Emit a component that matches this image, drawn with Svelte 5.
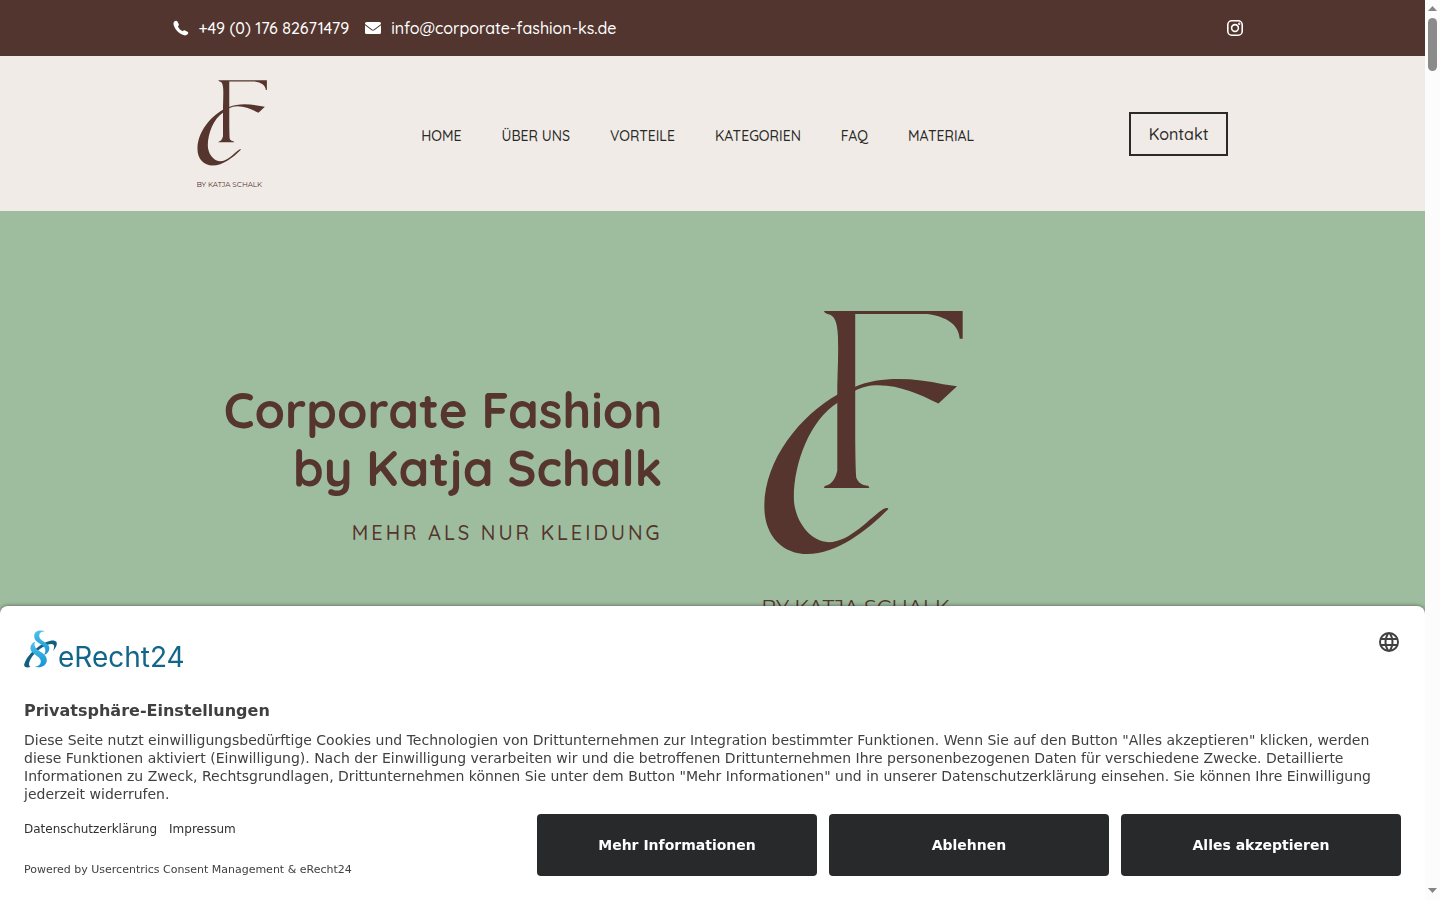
<script lang="ts">
  const phone = '+49 (0) 176 82671479';
  const mail = 'info@corporate-fashion-ks.de';

  const nav = [
    { label: 'Home', href: '#home' },
    { label: 'Über uns', href: '#ueber-uns' },
    { label: 'Vorteile', href: '#vorteile' },
    { label: 'Kategorien', href: '#kategorien' },
    { label: 'FAQ', href: '#faq' },
    { label: 'Material', href: '#material' },
  ];

  const actions = ['Mehr Informationen', 'Ablehnen', 'Alles akzeptieren'];
  let consentOpen = $state(true);

  function choose(action: string) {
    if (action !== 'Mehr Informationen') consentOpen = false;
  }
</script>

{#snippet brand()}
  <svg class="brand" viewBox="67 60 603 924" role="img" aria-label="CF by Katja Schalk">
    <path d="M251 63H669V147H660C658 105 622 80 562 72H345V400C345 470 346 530 348 565C354 580 364 588 384 590L388 597H251L253 591C275 586 284 572 291 545V290C292 240 295 190 293 140C291 95 283 76 262 72C255 71 252 67 251 63Z" />
    <path d="M343 292C420 259 520 264 610 284L652 290L596 342C540 315 480 287 415 287C385 287 365 293 343 304Z" />
    <path d="M293 314C180 378 72 510 71 650C70 745 130 796 200 796C290 796 380 725 445 660C444 656 438 656 430 660C390 685 330 760 265 760C205 757 160 690 160 625C160 520 210 390 293 339Z" />
    <text x="62" y="979">BY KATJA SCHALK</text>
  </svg>
{/snippet}

<div class="page">
  <div class="topbar">
    <div class="inner">
      <a href="tel:+4917682671479">
        <svg width="16" height="16" viewBox="0 0 16 16"><path d="M1.300 1.600C2.300.500 3.700.400 4.400 1.600L5.700 4C6.200 5 5.800 5.500 4.900 6.300C5.700 8.500 7.400 10.200 9.700 11.200C10.500 10.200 11.100 9.900 12 10.400L14.500 11.800C15.600 12.500 15.400 13.700 14.400 14.600C13.100 15.700 11.300 15.700 9 14.600C5.300 12.800 2.400 9.700 1 6C.300 4.200.200 2.700 1.300 1.600Z" /></svg>
        {phone}
      </a>
      <a href="mailto:{mail}">
        <svg width="16" height="16" viewBox="0 0 16 16"><path d="M1.500 2h13A1.500 1.500 0 0 1 16 3.500v.6L8.800 9.600c-.500.350-1.100.350-1.600 0L0 4.100v-.6A1.500 1.500 0 0 1 1.500 2zM0 5.300l6.600 5c.850.600 1.950.600 2.800 0l6.600-5v7.200a1.500 1.500 0 0 1-1.500 1.500h-13A1.500 1.500 0 0 1 0 12.500z" /></svg>
        {mail}
      </a>
      <a class="insta" href="#instagram" aria-label="Instagram">
        <svg width="16" height="16" viewBox="0 0 16 16" class="line"><rect x=".8" y=".8" width="14.4" height="14.4" rx="4" /><circle cx="8" cy="8" r="3.4" /><circle cx="12.2" cy="3.8" r=".4" /></svg>
      </a>
    </div>
  </div>

  <header>
    <div class="inner">
      <a class="logo" href="#home">{@render brand()}</a>
      <nav>
        {#each nav as item}
          <a href={item.href}>{item.label}</a>
        {/each}
      </nav>
      <a class="contact" href="#kontakt">Kontakt</a>
    </div>
  </header>

  <main>
    <div class="inner">
      <div class="intro">
        <h1>Corporate Fashion<br />by Katja Schalk</h1>
        <p>Mehr als nur Kleidung</p>
      </div>
      <div class="emblem">{@render brand()}</div>
    </div>
  </main>
</div>

{#if consentOpen}
  <section class="consent" role="dialog" aria-labelledby="consent-title">
    <div class="consent-head">
      <svg class="vendor" width="164" height="48" viewBox="0 0 164 48" role="img" aria-label="eRecht24">
        <defs>
          <linearGradient id="sky" x1="0" y1="0" x2="0" y2="1">
            <stop offset="0" stop-color="#4fc1ee" />
            <stop offset="1" stop-color="#1593d2" />
          </linearGradient>
        </defs>
        <path class="ring" d="M6.500 37C2 38-.500 37 .300 34C2 28.500 7 22 13.500 17.500C20 12.500 26.500 10 30.500 10.700C34.500 11.500 33 17 29 21C30.800 17 30.500 14 27.500 14C22 14.300 14 19.500 9 25.500C5.500 30 3.500 35 6.500 37Z" />
        <path class="para" d="M21.500 1.700C16.500-1 10.500.700 10.200 5.700C10 11 14.500 12.700 18 15C21.500 17.300 22.500 21 20 25C25.500 23 27.500 17 22.500 13.500C19.500 11.200 15 9.300 15.200 5.500C15.400 2.500 18 1.200 21.500 1.700Z" />
        <path class="para" d="M11 11.500C6 14 5 19 8.500 22.500C12 26 17 27.500 16.800 31.500C16.500 35 14.500 36.500 10.500 36.500C16 38.700 22.500 36 22.800 30.500C23 25.500 18.500 23.300 15 20.800C11.500 18.500 9.500 15.500 11 11.500Z" />
        <text x="34" y="37">eRecht24</text>
      </svg>
      <button class="lang" aria-label="Sprache wählen">
        <svg width="24" height="24" viewBox="0 0 24 24"><path d="M12 2a10 10 0 1 0 0 20 10 10 0 0 0 0-20zm6.900 6h-2.950a15.700 15.700 0 0 0-1.380-3.560A8 8 0 0 1 18.900 8zM12 4.040c.830 1.200 1.480 2.530 1.910 3.960h-3.820c.430-1.430 1.080-2.760 1.910-3.960zM4.260 14a8.200 8.200 0 0 1 0-4h3.380a16.500 16.500 0 0 0 0 4zm.820 2h2.950c.320 1.250.780 2.450 1.380 3.560A8 8 0 0 1 5.080 16zm2.950-8H5.080a8 8 0 0 1 4.330-3.560A15.700 15.700 0 0 0 8.030 8zM12 19.960A14 14 0 0 1 10.090 16h3.820A14 14 0 0 1 12 19.960zM14.340 14H9.660a14.700 14.700 0 0 1 0-4h4.680a14.600 14.600 0 0 1 0 4zm.250 5.560c.600-1.110 1.060-2.310 1.380-3.560h2.950a8 8 0 0 1-4.330 3.560zM16.360 14a16.500 16.500 0 0 0 0-4h3.380a8.200 8.200 0 0 1 0 4z" /></svg>
      </button>
    </div>
    <h2 id="consent-title">Privatsphäre-Einstellungen</h2>
    <p class="copy">
      Diese Seite nutzt einwilligungsbedürftige Cookies und Technologien von Drittunternehmen zur Integration
      bestimmter Funktionen. Wenn Sie auf den Button "Alles akzeptieren" klicken, werden diese Funktionen aktiviert
      (Einwilligung). Nach der Einwilligung verarbeiten wir und die betroffenen Drittunternehmen Ihre
      personenbezogenen Daten für verschiedene Zwecke. Detaillierte Informationen zu Zweck, Rechtsgrundlagen,
      Drittunternehmen können Sie unter dem Button "Mehr Informationen" und in unserer Datenschutzerklärung einsehen.
      Sie können Ihre Einwilligung jederzeit widerrufen.
    </p>
    <div class="consent-foot">
      <div class="legal">
        <div class="links">
          <a href="#datenschutz">Datenschutzerklärung</a>
          <a href="#impressum">Impressum</a>
        </div>
        <div class="powered">Powered by <a href="#usercentrics">Usercentrics Consent Management</a> &amp; <a href="#erecht24">eRecht24</a></div>
      </div>
      <div class="actions">
        {#each actions as action}
          <button onclick={() => choose(action)}>{action}</button>
        {/each}
      </div>
    </div>
  </section>
{/if}

<div class="scrollbar" aria-hidden="true">
  <svg width="15" height="16" viewBox="0 0 15 16"><path d="M3 11L7.500 6L12 11Z" /></svg>
  <div class="thumb"></div>
  <svg width="15" height="16" viewBox="0 0 15 16"><path d="M3 4H12L7.500 9Z" /></svg>
</div>

<style>
  :global(body) { margin: 0; overflow: hidden; }

  .page {
    --brown: #53352f;
    --ink: #2a2a28;
    min-height: 100vh;
    margin-right: 15px;
    display: flex;
    flex-direction: column;
    background: #9ebd9f;
    color: var(--ink);
    font-family: Quicksand, Lato, sans-serif;
    font-weight: 500;
  }
  a { color: inherit; text-decoration: none; }
  .inner { box-sizing: border-box; width: 100%; max-width: 1080px; margin: 0 auto; }

  .topbar { background: var(--brown); color: #fff; }
  .topbar .inner { display: flex; align-items: center; gap: 16px; height: 56px; }
  .topbar a { display: flex; align-items: center; gap: 10px; font-size: 16px; line-height: 24px; }
  .topbar svg { fill: currentColor; }
  .topbar .line { fill: none; stroke: currentColor; stroke-width: 1.6; }
  .topbar .insta { margin-left: auto; margin-right: 10px; }

  header { background: #f0ebe6; }
  header .inner {
    display: flex; align-items: center; justify-content: space-between;
    padding: 24px;
  }
  .logo { width: 70px; }
  .brand { display: block; width: 100%; fill: #55352e; }
  .brand text { font: 400 62px Montserrat, Inter, sans-serif; }
  nav { display: flex; gap: 40px; padding-top: 4px; }
  nav a { font-size: 14px; line-height: 20px; text-transform: uppercase; }
  .contact { border: 2px solid var(--ink); padding: 8px 18px; font-size: 16px; line-height: 24px; }

  main { flex: 1; color: #55352e; }
  main .inner { display: grid; grid-template-columns: 1fr 1fr; align-items: center; padding-top: 99px; }
  .intro { padding-right: 50px; text-align: right; }
  h1 { margin: 0; font-size: 49px; line-height: 58px; font-weight: 700; }
  .intro p { margin: 24px 0 0; font-size: 20px; line-height: 24px; letter-spacing: 3px; text-transform: uppercase; }
  .emblem { width: 200px; margin-left: 50px; }

  .consent {
    position: fixed; left: 0; right: 15px; bottom: 0;
    box-sizing: border-box;
    padding: 24px;
    border-radius: 8px 8px 0 0;
    background: #fff;
    color: #404040;
    box-shadow: 0 0 4px rgba(0, 0, 0, 0.5);
    font-family: "DejaVu Sans", sans-serif;
  }
  .consent-head { display: flex; justify-content: space-between; align-items: flex-start; height: 71px; }
  .vendor text { font: 400 28px Inter, sans-serif; fill: #12668a; }
  .ring { fill: #12607f; }
  .para { fill: url(#sky); }
  .lang { border: 0; padding: 0; background: none; }
  .lang svg { display: block; fill: #404040; }
  h2 { margin: 0; font-size: 16px; line-height: 20px; font-weight: 700; }
  .copy { margin: 10px 0 0; font-size: 14px; line-height: 18px; }
  .consent-foot { display: flex; align-items: flex-start; justify-content: space-between; gap: 24px; margin-top: 11px; }
  .links { display: flex; gap: 12px; margin-top: 6px; font-size: 12px; line-height: 18px; color: #303030; }
  .powered { margin-top: 26px; font-size: 11px; line-height: 12px; }
  .actions { display: flex; gap: 12px; }
  .actions button {
    width: 280px; height: 62px;
    border: 0; border-radius: 4px;
    background: #28292b; color: #fff;
    font: 700 14px "DejaVu Sans", sans-serif;
  }

  .scrollbar {
    position: fixed; top: 0; right: 0; bottom: 0;
    width: 15px;
    display: flex; flex-direction: column;
    background: #fcfcfc;
  }
  .scrollbar svg { fill: #858585; }
  .scrollbar svg:last-child { margin-top: auto; }
  .thumb { width: 9px; height: 53px; margin: 2px auto 0; border-radius: 5px; background: #8b8b8b; }
</style>
